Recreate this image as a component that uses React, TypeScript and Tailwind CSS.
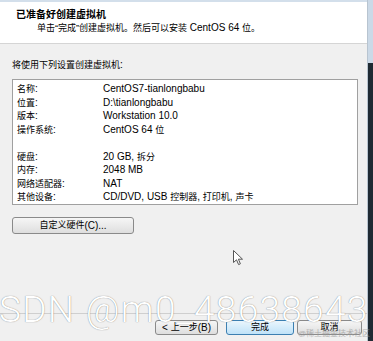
import React from "react";

const CJK = /([\u3000-\u303f\u4e00-\u9fff\uff00-\uffef\u201c\u201d]+)/;

function mix(s: string) {
  return s.split(CJK).map((p, i) =>
    /[\u3000-\u303f\u4e00-\u9fff\uff00-\uffef\u201c\u201d]/.test(p) ? (
      <span key={i} className="text-[9px]">
        {p}
      </span>
    ) : (
      <React.Fragment key={i}>{p}</React.Fragment>
    )
  );
}

const rows: [string, string][] = [
  ["名称:", "CentOS7-tianlongbabu"],
  ["位置:", "D:\\tianlongbabu"],
  ["版本:", "Workstation 10.0"],
  ["操作系统:", "CentOS 64 位"],
  ["", ""],
  ["硬盘:", "20 GB, 拆分"],
  ["内存:", "2048 MB"],
  ["网络适配器:", "NAT"],
  ["其他设备:", "CD/DVD, USB 控制器, 打印机, 声卡"],
];

export default function App() {
  return (
    <div
      className="relative w-[373px] h-[341px] overflow-hidden flex bg-[#f0f0f0] text-black text-[10px]"
      style={{ fontFamily: '"Liberation Sans", "Noto Sans CJK SC", sans-serif' }}
    >
      <div className="w-[367px] h-full flex flex-col border-t-2 border-[#d3dfeb]">
        {/* header */}
        <div className="h-[42px] bg-white border-b border-[#d5d5d5] flex flex-col pt-[6px]">
          <div className="pl-[16px] font-bold text-[10px] leading-[13px]">已准备好创建虚拟机</div>
          <div className="pl-[37px] leading-[13px]">{mix("单击“完成”创建虚拟机。然后可以安装 CentOS 64 位。")}</div>
        </div>
        {/* body */}
        <div className="px-[12px] flex flex-col">
          <div className="mt-[14px] leading-[14px]">{mix("将使用下列设置创建虚拟机:")}</div>
          <div className="mt-[7px] h-[126px] w-[346px] bg-white border border-[#a0a0a0] pt-[2px] pl-[4px]">
            {rows.map(([k, v], i) => (
              <div key={i} className="flex h-[13.5px] leading-[13.5px] whitespace-nowrap">
                <div className="w-[86px]">{mix(k)}</div>
                <div>{mix(v)}</div>
              </div>
            ))}
          </div>
          <button className="mt-[12px] w-[122px] h-[17px] rounded-[3px] border border-[#8a8a8a] bg-gradient-to-b from-[#f6f6f6] to-[#dedede] flex items-center justify-center leading-none">
            {mix("自定义硬件(C)...")}
          </button>
        </div>
        <div className="flex-1" />
        {/* footer */}
        <div className="h-[28px] border-t border-[#cfcfcf] flex items-start justify-end pt-[6px] pr-[5px]">
          <button className="w-[63px] h-[15px] rounded-[3px] border border-[#8a8a8a] bg-gradient-to-b from-[#f6f6f6] to-[#dedede] flex items-center justify-center leading-none whitespace-pre">
            {mix("< 上一步(B)")}
          </button>
          <button className="ml-[8px] w-[68px] h-[15px] rounded-[3px] border border-[#3c7fb1] bg-gradient-to-b from-[#eaf6fd] to-[#bfe2f8] flex items-center justify-center leading-none">
            {mix("完成")}
          </button>
          <button className="ml-[3px] w-[65px] h-[15px] rounded-[3px] border border-[#8a8a8a] bg-gradient-to-b from-[#f6f6f6] to-[#dedede] flex items-center justify-center leading-none">
            {mix("取消")}
          </button>
        </div>
      </div>
      {/* right window frame */}
      <div className="w-[6px] h-full flex flex-col border-l border-[#b8c4d0]">
        <div className="h-[63px] bg-[#cbd9e7]" />
        <div className="flex-1 bg-[#1f2a33]" />
      </div>

      {/* cursor */}
      <svg className="absolute left-[233px] top-[250px]" width="11" height="16" viewBox="0 0 11 16">
        <path d="M0.5 0.5 L0.5 12.5 L3.5 9.8 L5.6 14.6 L7.4 13.8 L5.4 9.2 L9.5 9.2 Z" fill="#ffffff" stroke="#555" strokeWidth="1" strokeLinejoin="round" />
      </svg>

      {/* watermarks */}
      <div
        className="absolute left-[-1px] top-[288px] text-[37px] leading-[44px] font-light tracking-[1.3px] text-white whitespace-nowrap [text-shadow:0_0_1px_rgba(0,0,0,0.55)]"
        style={{ fontFamily: 'Roboto, "Liberation Sans", sans-serif' }}
      >
        SDN @m0_48638643
      </div>
      <div className="absolute left-[298px] top-[329px] text-[8px] leading-[10px] text-[#9a9a9a] opacity-70 whitespace-nowrap">
        @稀土掘金技术社区
      </div>
    </div>
  );
}
